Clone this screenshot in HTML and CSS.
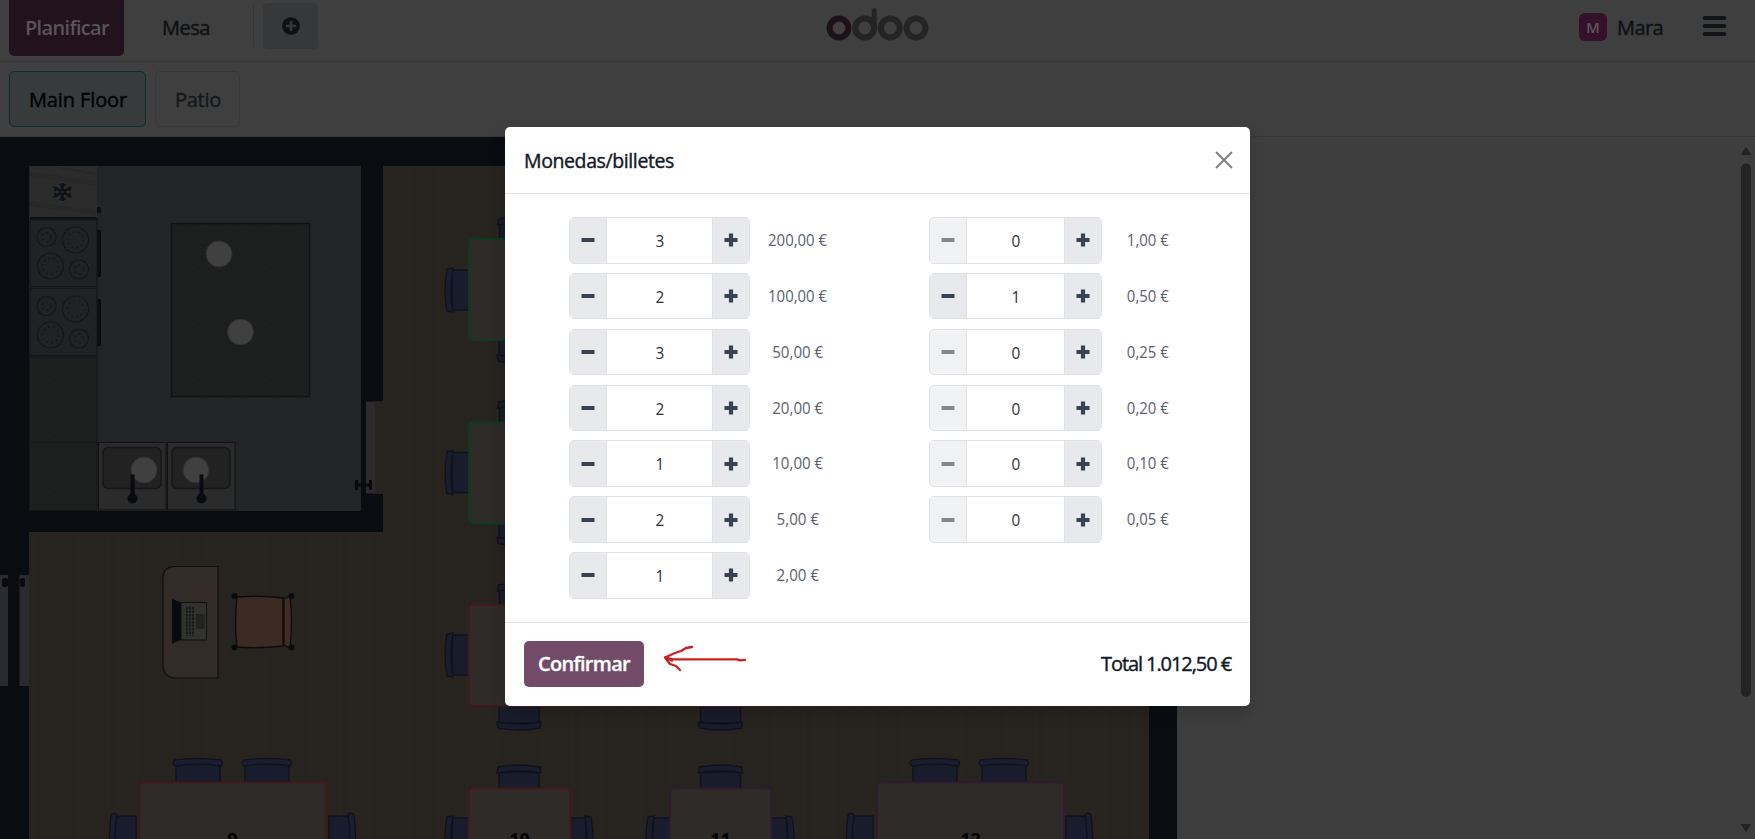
FILE: index.html
```html
<!DOCTYPE html>
<html lang="es">
<head>
<meta charset="utf-8">
<title>Odoo POS</title>
<link rel="stylesheet" href="styles.css">
</head>
<body>
<div class="app">
  <header class="topbar">
    <nav class="topbar-left">
      <span class="tab tab-active"><span class="fit" data-w="84">Planificar</span></span>
      <span class="tab tab-plain"><span class="fit" data-w="48">Mesa</span></span>
      <span class="divider"></span>
      <span class="add"><svg width="18" height="18" viewBox="0 0 18 18"><circle cx="9" cy="9" r="8.8" fill="#0e1114"/><path d="M9 4v10M4 9h10" stroke="#34363a" stroke-width="2.6"/></svg></span>
    </nav>
    <svg class="logo" width="104" height="36" viewBox="0 0 104 36" fill="none" stroke-width="6">
      <circle cx="13" cy="22" r="9.400" stroke="#1c1019"/>
      <g stroke="#242424"><circle cx="38.700" cy="22" r="9.400"/><path d="M48.200 22V4.500" stroke-width="5" stroke-linecap="round"/><circle cx="64.300" cy="22" r="9.400"/><circle cx="90" cy="22" r="9.400"/></g>
    </svg>
    <div class="user">
      <span class="avatar">M</span>
      <span class="user-name"><span class="fit" data-w="46">Mara</span></span>
      <svg class="burger" width="23" height="20" viewBox="0 0 23 20"><path d="M1.500 2h20M1.500 10h20M1.500 18h20" stroke="#111419" stroke-width="3.800" stroke-linecap="round"/></svg>
    </div>
  </header>
  <div class="floors">
    <span class="floor floor-active"><span class="fit" data-w="98">Main Floor</span></span>
    <span class="floor floor-second"><span class="fit" data-w="46">Patio</span></span>
  </div>
  <main class="plan">
    <svg class="plan-art" width="1755" height="702" viewBox="0 137 1755 702">
      <defs>
        <pattern id="wood" width="58" height="702" patternUnits="userSpaceOnUse">
          <rect width="58" height="702" fill="#27231e"/>
          <path d="M3 0v702M21 0v702M33 0v702M50 0v702" stroke="#28241f" stroke-width="1.500"/>
          <path d="M9 0v702M40 0v702" stroke="#26221d" stroke-width="1.500"/>
        </pattern>
        <pattern id="speckle" width="9" height="7" patternUnits="userSpaceOnUse">
          <rect width="9" height="7" fill="#1d1e1e"/>
          <path d="M1 1h1v1h-1zM5 0h1v1h-1zM7 3h1v1h-1zM3 5h1v1h-1z" fill="#1a1b1b"/>
          <path d="M3 2h1v1h-1zM8 5h1v1h-1zM5 4h1v1h-1z" fill="#202121"/>
        </pattern>
        <g id="hob" fill="none" stroke="#131718" stroke-width="1.200">
          <rect x=".5" y=".5" width="67" height="67" fill="#1f2325"/>
          <circle cx="17" cy="18" r="9.500"/><circle cx="46" cy="21" r="13"/><circle cx="21" cy="47" r="13"/><circle cx="49.500" cy="50.500" r="9.500"/>
          <g stroke-dasharray="2 3"><circle cx="17" cy="18" r="4.500"/><circle cx="46" cy="21" r="8"/><circle cx="21" cy="47" r="8"/><circle cx="49.500" cy="50.500" r="4.500"/></g>
          <rect x="68" y="11" width="3.500" height="47" fill="#090d10" stroke="none"/>
        </g>
        <g id="sink">
          <rect x=".5" y=".5" width="67.500" height="67.500" fill="#2b2b2b" stroke="#121212"/>
          <rect x="5" y="5.500" width="58" height="41" rx="5" fill="#222222" stroke="#161616" stroke-width="1.400"/>
        </g>
        <g id="tap"><path d="M0 0V24" stroke="#080b10" stroke-width="4"/><circle cy="24" r="5" fill="#080b10"/></g>
        <g id="seat" fill="#191c2c" stroke="#10121b" stroke-width="1.300">
          <path d="M3 26V7h40v19z"/><path d="M2 2Q23-2 44 2l1 6q-22-4-44 0z" fill="#1a1d2e"/>
        </g>
        <g id="wide" fill="#191c2c" stroke="#10121b" stroke-width="1.300">
          <path d="M4 26V5h44v21z"/><path d="M3 1Q26-2 49 1q3 3 0 6Q26 3 3 7q-4-3 0-6z" fill="#1b1e30"/>
        </g>
        <g id="double"><path d="M-7-5v10M7-5v10M-7 0H7" stroke="#07090c" stroke-width="3"/></g>
      </defs>
      <rect x="0" y="137" width="1177" height="702" fill="#090d12"/>
      <path d="M383 166H1149V839H29V532H383z" fill="url(#wood)"/>
      <rect x="375" y="401" width="9" height="93" fill="#27231e"/>
      <rect x="29" y="166" width="332" height="345" fill="#222526"/>

      <rect x="30" y="166" width="67" height="51" fill="#2c2c2c"/>
      <path d="M30 172L97 181v5L30 177zM30 201L97 211v4L30 206zM50 166L97 172v4z" fill="#282828"/>
      <g stroke="#0c1117" stroke-width="2.400" transform="translate(62.500 192)"><path d="M0-9V9M-8-4.500L8 4.500M-8 4.500L8-4.500"/><path d="M-3-8L0-5 3-8M-3 8L0 5 3 8M-8-1l2-3-3-1M8-1L6-4l3-1M-8 1l2 3-3 1M8 1L6 4l3 1" fill="none" stroke-width="1.400"/><circle r="2" fill="#2a2a2a" stroke-width="1.600"/></g>
      <rect x="97" y="207" width="4" height="6" rx="1" fill="#0b0e11"/>
      <rect x="30" y="217" width="67" height="2.500" fill="#101212"/>
      <use href="#hob" x="29.500" y="219"/><use href="#hob" x="29.500" y="288"/>
      <rect x="29.500" y="357" width="67.500" height="153.500" fill="url(#speckle)" stroke="#141515"/>
      <path d="M29 442.500H98" stroke="#141515"/>
      <use href="#sink" x="98" y="442"/><use href="#sink" x="167" y="442"/>
      <rect x="171.500" y="223.500" width="138" height="173" fill="url(#speckle)" stroke="#101111" stroke-width="1.400"/>
      <g fill="#404040" stroke="#303030"><circle cx="219" cy="254" r="13"/><circle cx="240.500" cy="332" r="13"/><circle cx="144" cy="470" r="13"/><circle cx="196" cy="470" r="13"/></g>
      <use href="#tap" x="132.500" y="474.500"/><use href="#tap" x="201.500" y="474.500"/>

      <rect x="366" y="401.500" width="9" height="92" fill="#2b2a2e"/>
      <use href="#double" x="363.500" y="485"/>
      <rect x="0" y="575" width="8" height="111" fill="#2b2a2e"/><rect x="19.500" y="575" width="9.500" height="111" fill="#2b2a2e"/>
      <g fill="#07090c"><rect x="2" y="578" width="6" height="9" rx="2.500"/><rect x="20" y="578" width="5" height="9" rx="2.500"/></g>

      <path d="M218 566.500H174q-11 1-11 11V667q1 10 11 11h44z" fill="#332b25" stroke="#100e0c" stroke-width="1.200"/>
      <path d="M172 599l9 3.500v37.500l-9 3.500z" fill="#070b10"/>
      <rect x="181" y="602.500" width="25.500" height="37.500" fill="#31312f" stroke="#111"/>
      <path d="M187 607v29M190 607v29M193 607v29" stroke="#181818" stroke-width="1.800" stroke-dasharray="2.500 1"/>
      <rect x="196" y="614" width="8.500" height="15" fill="#222"/>
      <path d="M237 597q22-2 46 1l0 48q-24 3-46 1-3-25 0-50z" fill="#3d2a23" stroke="#0e0c0b" stroke-width="1.400"/>
      <path d="M284 599l6-3q3 26 0 52l-6-3z" fill="#3f2c25" stroke="#0e0c0b" stroke-width="1.300"/>
      <g fill="#080a0c"><circle cx="234.500" cy="596" r="3"/><circle cx="291.500" cy="596" r="3"/><circle cx="234.500" cy="647.500" r="3"/><circle cx="291.500" cy="647.500" r="3"/></g>

      <g id="seats">
        <use href="#seat" transform="translate(445 313) rotate(-90)"/>
        <use href="#seat" transform="translate(445 495.500) rotate(-90)"/>
        <use href="#seat" transform="translate(445 678) rotate(-90)"/>
        <use href="#seat" transform="translate(445 861) rotate(-90)"/>
        <use href="#seat" x="496.500" y="217"/><use href="#seat" x="496.500" y="400"/><use href="#seat" x="496.500" y="583"/>
        <use href="#seat" transform="translate(542 363) rotate(180)"/>
        <use href="#seat" transform="translate(542 545.500) rotate(180)"/>
        <use href="#seat" transform="translate(542 730) rotate(180)"/>
        <use href="#seat" transform="translate(743.500 730) rotate(180)"/>
        <use href="#seat" x="496" y="765"/><use href="#seat" x="697.500" y="765"/>
        <use href="#seat" transform="translate(593 815) rotate(90)"/>
        <use href="#seat" transform="translate(646 861) rotate(-90)"/>
        <use href="#seat" transform="translate(794 815) rotate(90)"/>
        <use href="#wide" x="172" y="759"/><use href="#wide" x="241" y="759"/>
        <use href="#wide" x="909" y="759"/><use href="#wide" x="978" y="759"/>
        <use href="#wide" transform="translate(110 864) rotate(-90)"/><use href="#wide" transform="translate(355 812) rotate(90)"/>
        <use href="#wide" transform="translate(847 864) rotate(-90)"/><use href="#wide" transform="translate(1092 812) rotate(90)"/>
      </g>
      <g fill="#2f2b29" stroke-width="2">
        <g stroke="#0b3c1e"><rect x="469" y="239" width="101" height="101" rx="4"/><rect x="469" y="422.500" width="101" height="101" rx="4"/></g>
        <g stroke="#431919"><rect x="469" y="605" width="101" height="101" rx="4"/><rect x="469" y="788.500" width="101" height="101" rx="4"/><rect x="139.500" y="782.500" width="187" height="101" rx="4"/></g>
        <rect x="670" y="605" width="101" height="101" rx="4" stroke="#431919"/>
        <g stroke="#301c2e"><rect x="670" y="788.500" width="101" height="101" rx="4"/><rect x="877" y="782.500" width="187" height="101" rx="4"/></g>
      </g>
      <g class="table-no"><text x="232.500" y="845.500">9</text><text x="519.500" y="845.500">10</text><text x="720.500" y="845.500">11</text><text x="970.500" y="845.500">12</text></g>

      <rect x="1741" y="163.500" width="10" height="533.500" rx="5" fill="#232323"/>
      <path d="M1746 147.500l4.500 7h-9zM1746 831.500l4.500-7h-9z" fill="#232323" stroke="#232323" stroke-linejoin="round"/>
    </svg>
  </main>
</div>

<div class="overlay">
  <section class="modal">
    <header class="modal-head">
      <h1 class="title"><span class="fit" data-w="150">Monedas/billetes</span></h1>
      <svg class="close" width="18" height="18" viewBox="0 0 18 18"><path d="M1.500 1.500l15 15m0-15l-15 15" stroke="#7f7f7f" stroke-width="2" stroke-linecap="round"/></svg>
    </header>
    <div class="modal-body">
      <div class="col col-notes" id="notes"></div>
      <div class="col col-coins" id="coins"></div>
    </div>
    <footer class="modal-foot">
      <button class="confirm"><span class="fit" data-w="92">Confirmar</span></button>
      <svg class="arrow" width="84" height="28" viewBox="0 0 84 28" fill="none" stroke="#cc1f1f" stroke-width="2.300" stroke-linecap="round" stroke-linejoin="round"><path d="M29 3l-6 1-5 3-6 2L2 13.500l8 1.800H74l3 1 5-.5M2 13.500l5 6.500 6 2 4 4M2 13.500l7 3"/></svg>
      <strong class="total"><span class="fit" data-w="130">Total 1.012,50 €</span></strong>
    </footer>
  </section>
</div>
<script src="app.js"></script>
</body>
</html>
```

FILE: styles.css
```css
* { box-sizing: border-box; }
body { margin: 0; width: 1755px; height: 839px; overflow: hidden; background: #3f3f3f; font-family: "Open Sans", "Noto Sans", sans-serif; font-size: 20px; line-height: 28px; color: #0e1114; }
svg { display: block; flex: none; }
.fit { display: inline-block; white-space: nowrap; }
.app { width: 1755px; height: 839px; display: flex; flex-direction: column; }
.topbar { height: 62px; flex: none; display: flex; justify-content: space-between; align-items: flex-start; border-bottom: 1px solid #373737; position: relative; }
.topbar-left { display: flex; padding-left: 9px; }
.tab { display: flex; }
.tab-active { width: 115px; height: 56px; padding: 14px 0 0 16px; background: #21121d; color: #5a5458; border-radius: 0 0 5px 5px; font-weight: 600; }
.tab-plain { margin-left: 38px; padding-top: 14px; width: 91px; }
.tab-plain, .user-name, .floor, .title, .total { -webkit-text-stroke: .4px currentColor; }
.divider { width: 1px; height: 42px; margin-top: 5px; background: #363636; }
.add { width: 55px; height: 46px; margin: 3px 0 0 9px; background: #36383a; border-radius: 5px; display: grid; place-items: center; }
.logo { position: absolute; left: 826px; top: 6px; }
.user { display: flex; padding-right: 29px; }
.avatar { width: 28px; height: 28px; margin-top: 13px; border-radius: 6px; background: #35102b; color: #5d565b; font-size: 15px; font-weight: 600; text-align: center; }
.user-name { width: 96px; padding: 14px 0 0 10px; }
.burger { margin-top: 16px; }
.floors { height: 75px; flex: none; display: flex; gap: 9px; padding: 9px 9px 0; border-bottom: 1px solid #373737; }
.floor { height: 56px; border: 1px solid #383838; border-radius: 5px; padding: 14px 0 0 19px; }
.floor-active { width: 137px; border-color: #0b2f32; background: #373b3c; color: #000; }
.floor-second { width: 85px; color: #14171b; }
.plan { flex: 1; background: #3e3e3e; }
.table-no { font: 700 18px "Open Sans", sans-serif; fill: #000; text-anchor: middle; }
.overlay { position: absolute; inset: 0; display: flex; align-items: flex-start; padding: 127px 0 0 505px; }
.modal { width: 744.500px; height: 578.500px; background: #fff; border-radius: 5px; display: flex; flex-direction: column; box-shadow: 0 8px 16px rgba(0, 0, 0, .15); color: #111827; }
.modal-head { height: 67px; flex: none; display: flex; justify-content: space-between; padding: 20px 17px 0 19px; border-bottom: 1px solid #dee2e6; }
.title { margin: 0; font-size: 19.500px; line-height: 28px; font-weight: 400; }
.close { margin-top: 4px; }
.modal-body { flex: 1; display: flex; padding: 23px 0 0 64px; }
.col { display: flex; flex-direction: column; gap: 9.250px; width: 360px; flex: none; }
.col-coins { width: 300px; }
.row { display: flex; height: 46.600px; flex: none; }
.stepper { display: flex; border: 1px solid #dfe1e5; border-radius: 5px; overflow: hidden; width: 181px; }
.col-coins .stepper { width: 173px; }
.step { width: 36px; flex: none; background: #e7e9ed; display: grid; place-items: center; color: #374151; }
.step-off { background: #f1f2f4; color: #868686; }
.qty { flex: 1; border: solid #dfe1e5; border-width: 0 1px; }
.qty, .amount { font-size: 17px; line-height: 46px; text-align: center; color: #2b2f38; }
.qty span { display: inline-block; transform: scaleX(.9); }
.amount { width: 96px; color: #5a606c; }
.col-coins .amount { width: 91px; }
.modal-foot { height: 84px; flex: none; display: flex; align-items: flex-start; padding: 18px 18.500px 0 19px; border-top: 1px solid #e3e5e8; }
.confirm { width: 120px; height: 46px; border: 0; border-radius: 5px; background: #714b67; color: #fff; font: 600 20px/28px "Open Sans", sans-serif; padding: 0; -webkit-text-stroke: .3px currentColor; }
.arrow { margin: 3px 0 0 19px; }
.total { margin-left: auto; padding-top: 9px; font-weight: 400; }
```

FILE: app.js
```js
const notes = [[3, '200,00 €', 59], [2, '100,00 €', 59], [3, '50,00 €', 51], [2, '20,00 €', 51], [1, '10,00 €', 51], [2, '5,00 €', 42.5], [1, '2,00 €', 42.5]];
const coins = [[0, '1,00 €', 42], [1, '0,50 €', 42], [0, '0,25 €', 42], [0, '0,20 €', 42], [0, '0,10 €', 42], [0, '0,05 €', 42]];
const icon = d => `<svg width="14" height="14" viewBox="0 0 14 14"><path d="${d}" stroke="currentColor" stroke-width="4.2"/></svg>`;
const minus = icon('M.5 7h13');
const plus = icon('M.5 7h13M7 .5v13');
const row = ([n, label, w]) => `<div class="row"><div class="stepper"><span class="step ${n ? '' : 'step-off'}">${minus}</span><span class="qty"><span>${n}</span></span><span class="step">${plus}</span></div><div class="amount"><span class="fit squeeze" data-w="${w}">${label}</span></div></div>`;
document.getElementById('notes').innerHTML = notes.map(row).join('');
document.getElementById('coins').innerHTML = coins.map(row).join('');

// Bring each label to its set width: amounts are condensed, other labels are tracked.
document.querySelectorAll('.fit').forEach(el => {
  const width = el.getBoundingClientRect().width;
  const target = Number(el.dataset.w);
  if (el.classList.contains('squeeze')) {
    el.style.transform = `scaleX(${(target / width).toFixed(3)})`;
  } else {
    el.style.letterSpacing = ((target - width) / el.textContent.length).toFixed(3) + 'px';
  }
});
```
